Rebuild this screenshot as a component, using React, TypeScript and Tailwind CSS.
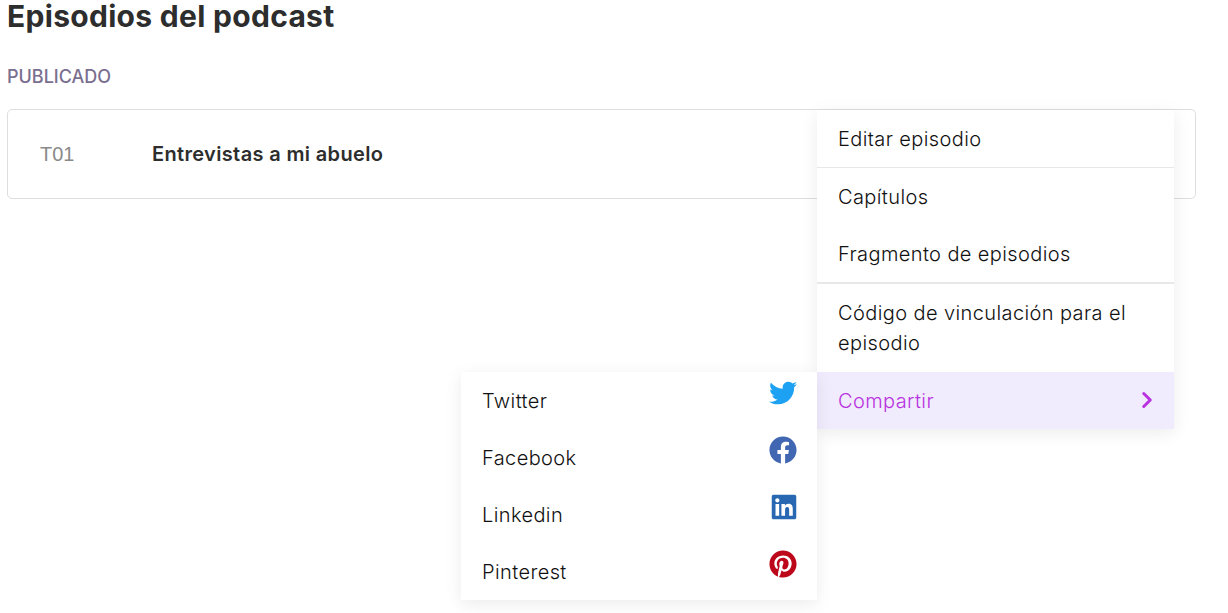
import { ChevronRight } from "lucide-react";
import { FaFacebook, FaLinkedin, FaPinterest, FaTwitter } from "react-icons/fa";

const shareLinks = [
  { label: "Twitter", icon: <FaTwitter className="text-[28px] text-[#1da1f2]" /> },
  { label: "Facebook", icon: <FaFacebook className="text-[28px] text-[#4267b2]" /> },
  { label: "Linkedin", icon: <FaLinkedin className="-mr-[1px] text-[28px] text-[#2867b2]" /> },
  { label: "Pinterest", icon: <FaPinterest className="text-[28px] text-[#bd081c]" /> },
];

function MenuItem({ children, className = "" }: { children: React.ReactNode; className?: string }) {
  return (
    <div className={`flex items-center px-[21px] text-[20px] font-light tracking-[0.4px] text-[#111111] ${className}`}>
      {children}
    </div>
  );
}

export default function App() {
  return (
    <div className="h-[613px] w-[1228px] overflow-hidden bg-white pr-[32px] pl-[7px] font-['Inter',sans-serif]">
      <h1 className="text-[30px] leading-[32px] font-bold tracking-[0.3px] text-[#2d2d2d]">Episodios del podcast</h1>
      <h2 className="mt-[33px] text-[18px] leading-[24px] font-medium text-[#7a6f8f]">PUBLICADO</h2>
      <div className="relative mt-[20px] flex h-[90px] items-center rounded-[5px] border border-[#dedede]">
        <span className="ml-[32px] w-[112px] font-['Liberation_Sans',sans-serif] text-[20px] text-[#8a8a8a]">T01</span>
        <span className="text-[20px] font-semibold tracking-[0.35px] text-[#2d2d2d]">Entrevistas a mi abuelo</span>

        <div className="absolute top-0 left-[809px] w-[357px] bg-white shadow-[0_4px_16px_rgba(0,0,0,0.08)]">
          <MenuItem className="h-[58px] border-b border-[#e8e8e8]">Editar episodio</MenuItem>
          <MenuItem className="h-[57px]">Capítulos</MenuItem>
          <MenuItem className="h-[59px] border-b-2 border-[#e8e8e8]">Fragmento de episodios</MenuItem>
          <div className="px-[21px] py-[14px] text-[20px] leading-[30px] font-light tracking-[0.4px] text-[#111111]">
            Código de vinculación para el episodio
          </div>
          <div className="relative flex h-[57px] items-center justify-between bg-[#f0ecfd] pr-[14px] pl-[21px] text-[20px] font-light tracking-[0.4px] text-[#b832e0]">
            Compartir
            <ChevronRight size={26} strokeWidth={2.8} className="-mt-[2px]" />
            <div className="absolute top-0 right-full w-[356px] bg-white shadow-[0_4px_16px_rgba(0,0,0,0.08)]">
              {shareLinks.map((link) => (
                <div key={link.label} className="flex h-[57px] items-center justify-between pr-[20px] pl-[21px] text-[20px] font-light tracking-[0.4px] text-[#111111]">
                  {link.label}
                  <span className="-mt-[15px]">{link.icon}</span>
                </div>
              ))}
            </div>
          </div>
        </div>
      </div>
    </div>
  );
}
